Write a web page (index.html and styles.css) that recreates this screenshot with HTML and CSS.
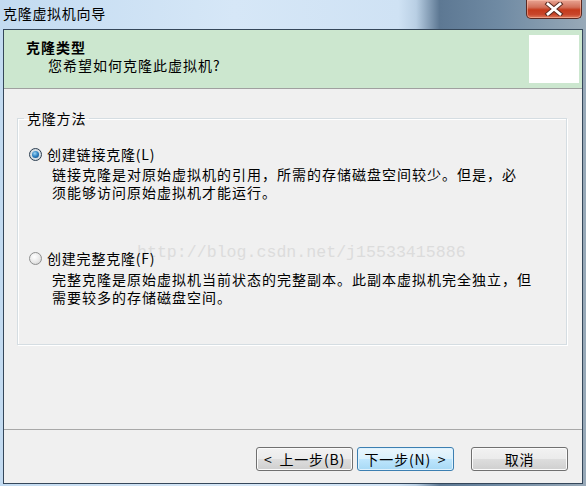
FILE: index.html
```html
<!DOCTYPE html>
<html>
<head>
<meta charset="utf-8">
<link rel="stylesheet" href="styles.css">
</head>
<body>
<div class="win">
  <div class="titlebar">
    <span class="title">克隆虚拟机向导</span>
    <div class="close">
      <svg width="20" height="14" viewBox="0 0 20 14">
        <path d="M4 2 L16 12 M16 2 L4 12" stroke="#5a2a20" stroke-width="4.8" stroke-linecap="square"/>
        <path d="M4 2 L16 12 M16 2 L4 12" stroke="#ffffff" stroke-width="2.8" stroke-linecap="square"/>
      </svg>
    </div>
  </div>
  <div class="client">
    <div class="header">
      <div class="htext">
        <div class="htitle">克隆类型</div>
        <div class="hsub">您希望如何克隆此虚拟机?</div>
      </div>
      <div class="hicon"></div>
    </div>
    <div class="body">
      <div class="watermark">http://blog.csdn.net/j15533415886</div>
      <fieldset class="group">
        <legend class="legend">克隆方法</legend>
        <div class="row">
          <span class="radio on"><span class="dot"></span></span>
          <span class="label">创建链接克隆(L)</span>
        </div>
        <div class="desc d1">链接克隆是对原始虚拟机的引用，所需的存储磁盘空间较少。但是，必<br>须能够访问原始虚拟机才能运行。</div>
        <div class="row r2">
          <span class="radio"></span>
          <span class="label">创建完整克隆(F)</span>
        </div>
        <div class="desc d2">完整克隆是原始虚拟机当前状态的完整副本。此副本虚拟机完全独立，但<br>需要较多的存储磁盘空间。</div>
      </fieldset>
    </div>
    <div class="footer">
      <button class="btn">&lt; 上一步(B)</button>
      <button class="btn focus">下一步(N) &gt;</button>
      <button class="btn cancel">取消</button>
    </div>
  </div>
</div>
</body>
</html>
```

FILE: styles.css
```css
* { box-sizing: border-box; }
html, body { margin: 0; padding: 0; }
body {
  width: 586px;
  height: 486px;
  overflow: hidden;
  font-family: "Noto Sans CJK SC", "Noto Sans", sans-serif;
  color: #000;
}
.win {
  width: 586px;
  height: 486px;
  display: flex;
  flex-direction: column;
  padding: 0 3px 2px 3px;
  background: linear-gradient(to right, #c3dbf1 0%, #d6e7f7 40%, #cfe2f4 68%, #b9cfe4 71%, #5d7893 75%, #6f8aa3 85%, #98a9b8 100%);
}
.titlebar {
  height: 29px;
  display: flex;
  align-items: flex-start;
  justify-content: space-between;
}
.title {
  font-size: 14px;
  letter-spacing: 0.7px;
  line-height: 18px;
  margin-top: 4px;
  color: #000;
}
.close {
  width: 56px;
  height: 19px;
  margin-right: 1px;
  border: 1px solid #5b2a22;
  border-top: none;
  border-radius: 0 0 5px 5px;
  background: linear-gradient(to bottom, #e8a493 0%, #d2705a 40%, #c53a1c 55%, #c8452a 80%, #de7d5e 100%);
  box-shadow: inset 0 0 0 1px rgba(255, 200, 180, 0.5);
  display: flex;
  align-items: center;
  justify-content: center;
}
.client {
  flex: 1;
  display: flex;
  flex-direction: column;
  border: 1px solid #35475a;
  background: #f0f0f0;
}
.header {
  height: 59px;
  background: #cce7cf;
  border-bottom: 1px solid #a0a0a0;
  display: flex;
  justify-content: space-between;
  padding: 5px 3px 0 22px;
}
.htext { padding-top: 3px; }
.htitle {
  font-size: 14px;
  font-weight: bold;
  letter-spacing: 1px;
  line-height: 18px;
}
.hsub {
  font-size: 14px;
  letter-spacing: 1px;
  line-height: 18px;
  margin-left: 22px;
}
.hicon {
  width: 50px;
  height: 48px;
  background: #ffffff;
}
.body {
  height: 340px;
  position: relative;
  padding: 20px 0 0 13px;
}
.watermark {
  position: absolute;
  left: 133px;
  top: 154px;
  font-family: "Liberation Mono", monospace;
  font-size: 16.6px;
  line-height: 20px;
  color: #dcdcdc;
  pointer-events: none;
}
.group {
  position: relative;
  margin: 0;
  width: 550px;
  height: 236px;
  padding: 18px 0 0 0;
  border: 1px solid #d5dde2;
  box-shadow: inset 1px 1px 0 #ffffff, 1px 1px 0 #ffffff;
}
.legend {
  margin-left: 6px;
  padding: 0 3px;
  font-size: 14px;
  letter-spacing: 0.8px;
  line-height: 18px;
}
.row {
  display: flex;
  align-items: center;
  padding-left: 11px;
  gap: 5px;
  height: 18px;
}
.r2 { margin-top: 48px; }
.label {
  font-size: 14px;
  letter-spacing: 0.8px;
  line-height: 18px;
}
.radio {
  width: 13px;
  height: 13px;
  border-radius: 50%;
  border: 1px solid #8e8f8f;
  background: radial-gradient(circle at 40% 35%, #ffffff 0%, #e8e8e8 55%, #c8c8c8 100%);
  display: flex;
  align-items: center;
  justify-content: center;
}
.radio.on {
  border-color: #2c3e50;
  background: radial-gradient(circle at 50% 50%, #e8eef2 0%, #c8d2da 100%);
}
.dot {
  width: 7px;
  height: 7px;
  border-radius: 50%;
  background: radial-gradient(circle at 40% 35%, #9ad4f5 0%, #2a7fc1 50%, #0f3f73 100%);
}
.desc {
  margin-top: 2px;
  padding-left: 34px;
  font-size: 14px;
  letter-spacing: 1px;
  line-height: 18px;
  white-space: nowrap;
}
.d2 { margin-top: 3px; }
.footer {
  flex: 1;
  border-top: 1px solid #a8a8a8;
  display: flex;
  justify-content: flex-end;
  align-items: flex-start;
  padding: 17px 14px 0 0;
}
.btn {
  width: 97px;
  height: 24px;
  margin: 0;
  margin-left: 4px;
  padding: 0;
  border: 1px solid #707070;
  border-radius: 3px;
  background: linear-gradient(to bottom, #f2f2f2 0%, #ebebeb 48%, #dddddd 52%, #cfcfcf 100%);
  box-shadow: inset 0 0 0 1px #fbfbfb;
  font-family: "Noto Sans CJK SC", "Noto Sans", sans-serif;
  font-size: 14px;
  line-height: 20px;
  letter-spacing: 0.8px;
  word-spacing: 3px;
  color: #000;
}
.btn.focus {
  border-color: #3c7fb1;
  background: linear-gradient(to bottom, #eaf6fd 0%, #d9f0fc 48%, #bee6fd 52%, #a7d9f5 100%);
  box-shadow: inset 0 0 0 1px #dff2fd;
}
.btn.cancel { margin-left: 17px; }
```
